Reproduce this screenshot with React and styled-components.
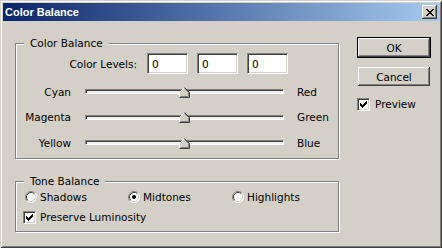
import React from 'react'
import styled, { createGlobalStyle } from 'styled-components'

const GlobalStyle = createGlobalStyle`
  html, body {
    margin: 0;
    padding: 0;
    background: #D4D0C8;
  }
  body {
    font-family: 'DejaVu Sans', 'Liberation Sans', sans-serif;
    font-size: 10.5px;
    color: #000;
  }
`

const Window = styled.div`
  width: 442px;
  height: 248px;
  box-sizing: border-box;
  padding: 3px 2px 0 3px;
  background: #D4D0C8;
  box-shadow: inset 1px 1px 0 #D4D0C8, inset -1px -1px 0 #404040,
    inset 2px 2px 0 #fff, inset -2px -2px 0 #808080;
  display: flex;
  flex-direction: column;
`

const TitleBar = styled.div`
  height: 18px;
  background: linear-gradient(to right, #0A246A, #A6CAF0);
  display: flex;
  align-items: center;
  justify-content: space-between;
  padding: 0 3px 0 2px;
`

const Title = styled.span`
  font-family: 'Liberation Sans', Arial, sans-serif;
  font-weight: bold;
  font-size: 11px;
  color: #fff;
`

const CloseButton = styled.div`
  width: 15px;
  height: 14px;
  box-sizing: border-box;
  background: #D4D0C8;
  box-shadow: inset -1px -1px 0 #404040, inset 1px 1px 0 #fff,
    inset -2px -2px 0 #808080;
  display: flex;
  align-items: center;
  justify-content: center;
`

const Content = styled.div`
  display: flex;
  padding: 16px 0 0 12px;
`

const LeftCol = styled.div`
  width: 324px;
  margin-top: 6px;
  display: flex;
  flex-direction: column;
  gap: 22px;
`

const Group = styled.div`
  position: relative;
  box-sizing: border-box;
  height: ${p => p.$h}px;
  border: 1px solid #808080;
  box-shadow: inset 1px 1px 0 #fff, 1px 1px 0 #fff;
  padding: ${p => p.$pad};
`

const Legend = styled.span`
  position: absolute;
  top: -8px;
  left: 8px;
  padding: 0 6px;
  background: #D4D0C8;
  line-height: 14px;
`

const LevelsRow = styled.div`
  display: flex;
  justify-content: flex-end;
  align-items: center;
  padding-right: 50px;
  gap: 9px;
`

const LevelsLabel = styled.span`
  margin-right: 1px;
`

const NumInput = styled.div`
  width: 41px;
  height: 21px;
  box-sizing: border-box;
  background: #fff;
  border: 1px solid;
  border-color: #808080 #fff #fff #808080;
  box-shadow: inset 1px 1px 0 #404040, inset -1px -1px 0 #D4D0C8;
  padding: 0 4px;
  display: flex;
  align-items: center;
`

const SliderGrid = styled.div`
  display: grid;
  grid-template-columns: 55px 199px auto;
  grid-auto-rows: 25.5px;
  column-gap: 14px;
  align-items: center;
  margin-top: 5px;
`

const SideLabel = styled.span`
  text-align: ${p => (p.$right ? 'right' : 'left')};
  margin-left: ${p => (p.$right ? 0 : -1)}px;
`

const SliderCell = styled.div`
  position: relative;
  height: 100%;
  display: flex;
  align-items: center;
`

const Track = styled.div`
  width: 100%;
  height: 5px;
  box-sizing: border-box;
  border: 1px solid;
  border-color: #808080 #fff #fff #808080;
  box-shadow: inset 1px 1px 0 #404040;
  background: #F2F1EC;
`

const ThumbWrap = styled.div`
  position: absolute;
  left: 50%;
  top: 50%;
  width: 11px;
  height: 11px;
  margin: -5px 0 0 -6px;
  display: flex;
`

const ToneRow = styled.div`
  display: grid;
  grid-template-columns: 103px 104px auto;
  height: 16px;
  align-items: center;
`

const Option = styled.label`
  display: flex;
  align-items: center;
  gap: ${p => p.$gap || 4}px;
  margin-left: ${p => p.$ml || 0}px;
  margin-top: ${p => p.$mt || 0}px;
  height: 16px;
  white-space: nowrap;
`

const CheckBox = styled.span`
  width: 13px;
  height: 13px;
  box-sizing: border-box;
  flex: none;
  background: #fff;
  border: 1px solid;
  border-color: #808080 #fff #fff #808080;
  box-shadow: inset 1px 1px 0 #404040, inset -1px -1px 0 #D4D0C8;
  display: flex;
  align-items: center;
  justify-content: center;
`

const RightCol = styled.div`
  margin-left: 18px;
  display: flex;
  flex-direction: column;
  align-items: flex-start;
`

const Button = styled.div`
  width: 72px;
  height: 19px;
  box-sizing: border-box;
  background: #D4D0C8;
  box-shadow: inset -1px -1px 0 #404040, inset 1px 1px 0 #fff,
    inset -2px -2px 0 #808080;
  outline: ${p => (p.$default ? '1px solid #000' : 'none')};
  margin: ${p => p.$m};
  display: flex;
  align-items: center;
  justify-content: center;
`

const Thumb = () => (
  <svg width="11" height="11" viewBox="0 0 11 11">
    <polygon points="5.5,0 11,5.5 11,11 0,11 0,5.5" fill="#D4D0C8" />
    <polyline points="0.5,10.5 0.5,5.5 5.5,0.5" fill="none" stroke="#fff" />
    <polyline points="5.5,0.5 10.5,5.5 10.5,10.5 0.5,10.5" fill="none" stroke="#404040" />
    <polyline points="5.5,1.5 9.5,5.5 9.5,9.5 1.5,9.5" fill="none" stroke="#808080" />
  </svg>
)

const Radio = ({ on }) => (
  <svg width="12" height="12" viewBox="0 0 12 12" style={{ flex: 'none' }}>
    <circle cx="6" cy="6" r="5" fill="#fff" />
    <path d="M9.89 2.11 A5.5 5.5 0 0 0 2.11 9.89" fill="none" stroke="#808080" />
    <path d="M2.11 9.89 A5.5 5.5 0 0 0 9.89 2.11" fill="none" stroke="#fff" />
    <path d="M9.18 2.82 A4.5 4.5 0 0 0 2.82 9.18" fill="none" stroke="#404040" />
    <path d="M2.82 9.18 A4.5 4.5 0 0 0 9.18 2.82" fill="none" stroke="#D4D0C8" />
    {on && <circle cx="6" cy="6" r="2" fill="#000" />}
  </svg>
)

const Check = () => (
  <svg width="7" height="7" viewBox="0 0 7 7" shapeRendering="crispEdges">
    <path
      d="M0 2h1v3h-1z M1 3h1v3h-1z M2 4h1v3h-1z M3 3h1v3h-1z M4 2h1v3h-1z M5 1h1v3h-1z M6 0h1v3h-1z"
      fill="#000"
    />
  </svg>
)

const CloseX = () => (
  <svg width="8" height="7" viewBox="0 0 8 7" shapeRendering="crispEdges">
    <path
      d="M0 0h2v1h-2z M6 0h2v1h-2z M1 1h2v1h-2z M5 1h2v1h-2z M2 2h4v1h-4z M3 3h2v1h-2z M2 4h4v1h-4z M1 5h2v1h-2z M5 5h2v1h-2z M0 6h2v1h-2z M6 6h2v1h-2z"
      fill="#000"
    />
  </svg>
)

const sliders = [
  ['Cyan', 'Red'],
  ['Magenta', 'Green'],
  ['Yellow', 'Blue'],
]

export default function App() {
  return (
    <Window>
      <GlobalStyle />
      <TitleBar>
        <Title>Color Balance</Title>
        <CloseButton><CloseX /></CloseButton>
      </TitleBar>
      <Content>
        <LeftCol>
          <Group $h={116} $pad="9px 0 0 0">
            <Legend>Color Balance</Legend>
            <LevelsRow>
              <LevelsLabel>Color Levels:</LevelsLabel>
              <NumInput>0</NumInput>
              <NumInput>0</NumInput>
              <NumInput>0</NumInput>
            </LevelsRow>
            <SliderGrid>
              {sliders.map(([l, r]) => (
                <React.Fragment key={l}>
                  <SideLabel $right>{l}</SideLabel>
                  <SliderCell>
                    <Track />
                    <ThumbWrap><Thumb /></ThumbWrap>
                  </SliderCell>
                  <SideLabel>{r}</SideLabel>
                </React.Fragment>
              ))}
            </SliderGrid>
          </Group>
          <Group $h={51} $pad="7px 0 0 7px">
            <Legend>Tone Balance</Legend>
            <ToneRow>
              <Option $ml={2} $gap={3}><Radio />Shadows</Option>
              <Option $ml={2} $gap={3}><Radio on />Midtones</Option>
              <Option $ml={2} $gap={3}><Radio />Highlights</Option>
            </ToneRow>
            <Option $mt={4}><CheckBox><Check /></CheckBox>Preserve Luminosity</Option>
          </Group>
        </LeftCol>
        <RightCol>
          <Button $default $m="1px 0 0 1px">OK</Button>
          <Button $m="10px 0 0 1px">Cancel</Button>
          <Option $mt={10} $gap={5}><CheckBox><Check /></CheckBox>Preview</Option>
        </RightCol>
      </Content>
    </Window>
  )
}
